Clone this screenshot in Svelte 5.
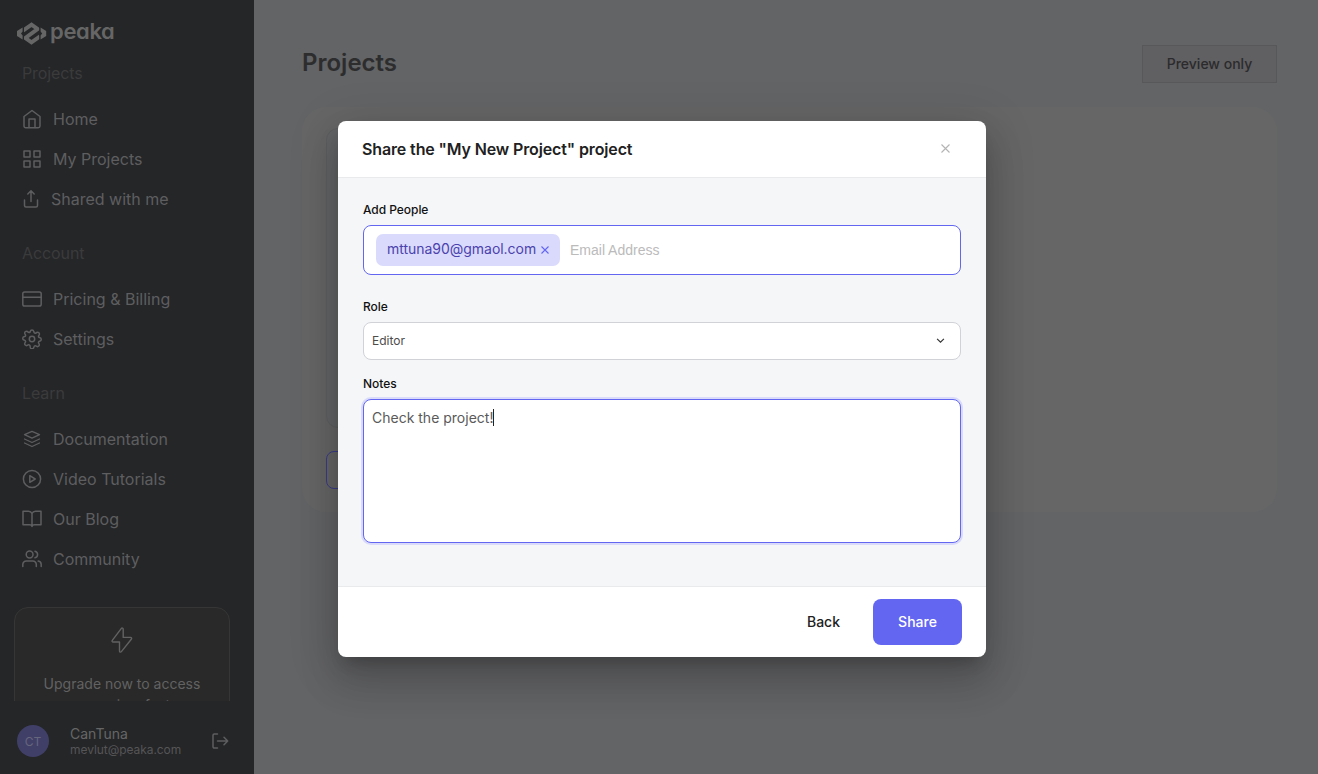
<script>
  const sections = [
    { title: 'Projects', items: [
      { icon: 'home', label: 'Home' },
      { icon: 'grid', label: 'My Projects' },
      { icon: 'share', label: 'Shared with me' } ] },
    { title: 'Account', items: [
      { icon: 'card', label: 'Pricing & Billing' },
      { icon: 'gear', label: 'Settings' } ] },
    { title: 'Learn', items: [
      { icon: 'layers', label: 'Documentation' },
      { icon: 'play', label: 'Video Tutorials' },
      { icon: 'book', label: 'Our Blog' },
      { icon: 'users', label: 'Community' } ] }
  ];
</script>

<div class="page">
  <aside>
    <div class="logo">
      <svg width="31" height="25" viewBox="0 0 31 25" fill="currentColor">
        <clipPath id="mark"><rect x="8" y="0" width="15.200" height="25" /></clipPath>
        <path clip-path="url(#mark)" d="M7 9.600 15.500 3.600 21.600 8 9.400 17 15.500 21.400 24 15.400" fill="none" stroke="currentColor" stroke-width="4" />
        <path d="M6.600 6.600v4L5 12.500l1.600 1.900v4L1 15V10ZM24.600 6.600v4l1.600 1.900-1.600 1.900v4l5.600-3.400V10Z" />
      </svg>
      <span>peaka</span>
    </div>
    <nav>
      {#each sections as s}
        <h3>{s.title}</h3>
        {#each s.items as it}
          <a>
            <svg width={it.icon === 'share' ? 18 : 20} height="20" viewBox={it.icon === 'share' ? '1 0 18 20' : '0 0 20 20'} fill="none" stroke="currentColor" stroke-width="1.5" stroke-linecap="round" stroke-linejoin="round">
              {#if it.icon === 'home'}
                <path d="M2 7.5 10 1.5l8 6v9.500a1.700 1.700 0 0 1-1.700 1.700H3.700A1.700 1.700 0 0 1 2 17Z" /><path d="M7 18.500V10h6v8.500" />
              {:else if it.icon === 'grid'}
                <path d="M2 2h6v6H2ZM12 2h6v6h-6ZM2 12h6v6H2ZM12 12h6v6h-6Z" />
              {:else if it.icon === 'share'}
                <path d="M3.500 11v5.500A1.500 1.500 0 0 0 5 18h10a1.500 1.500 0 0 0 1.500-1.500V11M10 12.500V2M6.800 5 10 1.800 13.200 5" />
              {:else if it.icon === 'card'}
                <rect x=".8" y="3" width="18.400" height="14" rx="1.800" /><path d="M.8 8.200h18.400" />
              {:else if it.icon === 'gear'}
                <circle cx="10" cy="10" r="2.700" />
                <path d="M8.300 2.300C8.700.4 11.300.4 11.700 2.300L12 3.200a1.300 1.300 0 0 0 1.900.8l.9-.5c1.500-.8 3.200.8 2.400 2.400l-.5.8a1.300 1.300 0 0 0 .8 1.900l.6.2c1.500.4 1.500 2.800 0 3.200l-.7.2a1.300 1.300 0 0 0-.8 1.900l.5.9c.8 1.500-.8 3.200-2.400 2.400l-.8-.5a1.300 1.300 0 0 0-1.900.8l-.3.9c-.4 1.500-3 1.500-3.400 0L8 16.700a1.300 1.300 0 0 0-1.900-.8l-.8.5c-1.600.8-3.200-.9-2.400-2.400l.5-.9a1.300 1.300 0 0 0-.8-1.900l-.7-.2c-1.500-.4-1.500-2.800 0-3.200l.7-.2a1.300 1.300 0 0 0 .8-1.900l-.5-.8c-.8-1.600.9-3.200 2.400-2.400l.8.5A1.300 1.300 0 0 0 8 3.200Z" />
              {:else if it.icon === 'layers'}
                <path stroke-width="1.300" d="M10 2.300 17.500 5.700 10 9.200 2.500 5.700ZM2.500 10 10 13.500 17.500 10M2.500 14 10 17.500 17.500 14" />
              {:else if it.icon === 'play'}
                <circle cx="10" cy="10" r="8.600" /><path d="M7.800 6.700v6.600L13.200 10Z" />
              {:else if it.icon === 'book'}
                <path d="M10 4.500C9.300 3 8 2.300 6.500 2.300H1v13.500h6.500c1.400 0 2.500.6 2.500 1.700 0-1.100 1.100-1.700 2.500-1.700H19V2.300h-5.500C12 2.300 10.700 3 10 4.500v13" />
              {:else}
                <circle cx="7.600" cy="5.500" r="3.400" /><path d="M.8 17.500v-2a3.500 3.500 0 0 1 3.500-3.600h6.500a3.500 3.500 0 0 1 3.500 3.600v2M13 2.200a3.400 3.400 0 0 1 0 6.600M16.200 12.100a3.500 3.500 0 0 1 3 3.400v2" />
              {/if}
            </svg>
            <span>{it.label}</span>
          </a>
        {/each}
      {/each}
      <div class="upgrade">
        <svg width="24" height="28" viewBox="0 0 24 28" fill="none" stroke="currentColor" stroke-width="1.400" stroke-linejoin="round"><path d="M11.200 2.600 2.300 14.300c-.6.800-.2 1.700.8 1.700h6.400v9c0 1.200 1.200 1.500 1.900.6l9.900-12.400c.7-.9.3-1.800-.8-1.800h-7.300V3.200c0-1.200-1.300-1.500-2-.6Z" /></svg>
        <p>Upgrade now to access<br />more premium features</p>
      </div>
    </nav>
    <footer>
      <div class="avatar">CT</div>
      <div class="who"><b>CanTuna</b><small>mevlut@peaka.com</small></div>
      <svg width="17" height="16" viewBox="0 0 17 16" fill="none" stroke="currentColor" stroke-width="1.500" stroke-linejoin="round" stroke-linecap="round"><path d="M5.500 1H2.200A1.200 1.200 0 0 0 1 2.200v11.600A1.200 1.200 0 0 0 2.200 15h3.300M5.500 8h10M12 4.300 15.700 8 12 11.700" /></svg>
    </footer>
  </aside>

  <main>
    <header><h1>Projects</h1><button class="preview">Preview only</button></header>
    <section><div class="project"></div><div class="open"></div></section>
  </main>

  <div class="layer">
    <div class="modal">
      <div class="head">
        <h2>Share the "My New Project" project</h2>
        <svg width="9" height="9" viewBox="0 0 9 9" stroke="#b4b4b4" stroke-width="1.100"><path d="M.5.5l8 8M8.500.5l-8 8" /></svg>
      </div>
      <div class="body">
        <label for="people">Add People</label>
        <div class="people">
          <span class="chip"><span>mttuna90@gmaol.com</span><svg width="8" height="8" viewBox="0 0 8 8" stroke="#6366f1" stroke-width="1.100"><path d="M.5.5l7 7M7.500.5l-7 7" /></svg></span>
          <span class="hint">Email Address</span>
        </div>
        <label for="role">Role</label>
        <div class="select"><span>Editor</span><svg width="9" height="6" viewBox="0 0 9 6" fill="none" stroke="#333" stroke-width="1.200"><path d="M1.100.9l3.400 3.200L7.900.9" /></svg></div>
        <label for="notes">Notes</label>
        <div class="notes"><span>Check the project!</span><i></i></div>
      </div>
      <div class="actions"><button class="back">Back</button><button class="go">Share</button></div>
    </div>
  </div>
</div>

<style>
  :global(body) { margin: 0; }
  .page, .page * { box-sizing: border-box; }
  .page { position: relative; display: flex; width: 1318px; height: 774px; overflow: hidden; font-family: Inter, sans-serif; background: #636466; }
  h1, h2, h3, p { margin: 0; }
  button { font-family: inherit; border: 0; padding: 0; }
  svg { flex: none; }
  aside { width: 254px; flex: none; background: #252628; color: #5e5e60; display: flex; flex-direction: column; }
  .logo { height: 53px; padding: 21px 0 0 16px; display: flex; gap: 3px; color: #666; }
  .logo span { font-weight: 600; font-size: 22px; line-height: 24px; margin-top: -2px; letter-spacing: -.35px; font-feature-settings: "cv11"; }
  nav { height: 648px; overflow: hidden; }
  h3 { height: 40px; margin: 14px 0 6px 22px; font-weight: 400; font-size: 16px; line-height: 40px; letter-spacing: -.1px; color: #3b3b3c; }
  h3:first-child { margin-top: 0; }
  a { display: flex; align-items: center; height: 40px; padding-left: 22px; gap: 11px; font-size: 16px; }
  .upgrade { margin: 28px 0 0 14px; width: 216px; height: 180px; border: 1px solid #363636; border-radius: 14px; background: #292929; display: flex; flex-direction: column; align-items: center; padding-top: 18px; color: #626262; }
  .upgrade p { margin-top: 19px; font-size: 14px; line-height: 21px; text-align: center; }
  footer { flex: 1; display: flex; align-items: center; padding: 6px 25px 0 17px; }
  .avatar { width: 32px; height: 32px; border-radius: 50%; background: #403f68; color: #66667c; font-size: 12px; line-height: 33px; text-align: center; }
  .who { margin-left: 21px; display: flex; flex-direction: column; flex: 1; }
  .who b { font-weight: 400; font-size: 14px; line-height: 17px; color: #666; }
  .who small { font-size: 12px; line-height: 15px; letter-spacing: -.06px; color: #555557; }
  main { flex: 1; padding: 45px 41px 0 48px; }
  header { display: flex; justify-content: space-between; height: 62px; }
  h1 { font-size: 24px; font-weight: 600; line-height: 36px; color: #2d2d2e; }
  .preview { width: 135px; height: 38px; padding-bottom: 2px; background: #605f61; border: 1px solid #58585a; color: #2b2b2d; font-size: 14px; font-weight: 500; }
  section { height: 405px; background: #666; border-radius: 24px; padding: 21px 24px; }
  .project { width: 300px; height: 300px; border: 1px solid #5e5f61; border-radius: 12px; background: #646566; }
  .open { width: 300px; height: 38px; margin-top: 23px; border: 1px solid #3b3c8a; border-radius: 8px; }
  .layer { position: absolute; inset: 0; padding: 121px 0 0 338px; }
  .modal { width: 648px; height: 536px; border-radius: 8px; overflow: hidden; background: #fff; display: flex; flex-direction: column; box-shadow: 0 11px 15px -7px rgba(0,0,0,.2), 0 24px 38px 3px rgba(0,0,0,.14), 0 9px 46px 8px rgba(0,0,0,.12); }
  .head { height: 57px; border-bottom: 1px solid #e9eaec; display: flex; align-items: center; justify-content: space-between; padding: 0 36px 0 24px; }
  .head svg { margin-bottom: 1px; }
  h2 { font-size: 16px; font-weight: 600; letter-spacing: -.13px; color: #212121; }
  .body { height: 408px; background: #f5f6f8; padding: 24px 25px; display: flex; flex-direction: column; }
  label { font-size: 12px; font-weight: 500; line-height: 16px; color: #111; height: 23px; letter-spacing: -.05px; }
  .people { height: 50px; margin-bottom: 24px; border: 1px solid #6366f1; border-radius: 8px; background: #fff; display: flex; align-items: center; padding: 0 12px 1px; }
  .chip { height: 32px; width: 184px; border-radius: 7px; background: #dadafc; color: #4b42ad; font-size: 14px; line-height: 30px; padding: 0 11px; display: flex; align-items: center; justify-content: space-between; letter-spacing: -.03px; }
  .chip span { padding-bottom: 2px; }
  .hint { margin-left: 10px; font: 14px "Liberation Sans", sans-serif; color: #bbb; }
  .select { height: 38px; margin-bottom: 16px; border: 1px solid #d1d2d8; border-radius: 8px; background: #fff; display: flex; align-items: center; justify-content: space-between; padding: 0 15px 0 8px; font-size: 12px; color: #4c4c4c; }
  .select span { padding-bottom: 2px; }
  .notes { height: 144px; border: 1px solid #6366f1; border-radius: 8px; background: #fff; box-shadow: 0 0 0 2px #dadbfb; padding: 7px 8px; display: flex; font-size: 14px; line-height: 21px; color: #5a5a5a; }
  .notes i { width: 1px; height: 17px; margin-top: 2px; background: #222; }
  .actions { flex: 1; border-top: 1px solid #e9eaec; display: flex; align-items: center; justify-content: flex-end; padding-right: 24px; }
  .actions button { font-size: 14px; font-weight: 500; padding-bottom: 2px; }
  .back { background: none; color: #212121; margin-right: 33px; }
  .go { width: 89px; height: 46px; border-radius: 8px; background: #6366f1; color: #fff; }
</style>
